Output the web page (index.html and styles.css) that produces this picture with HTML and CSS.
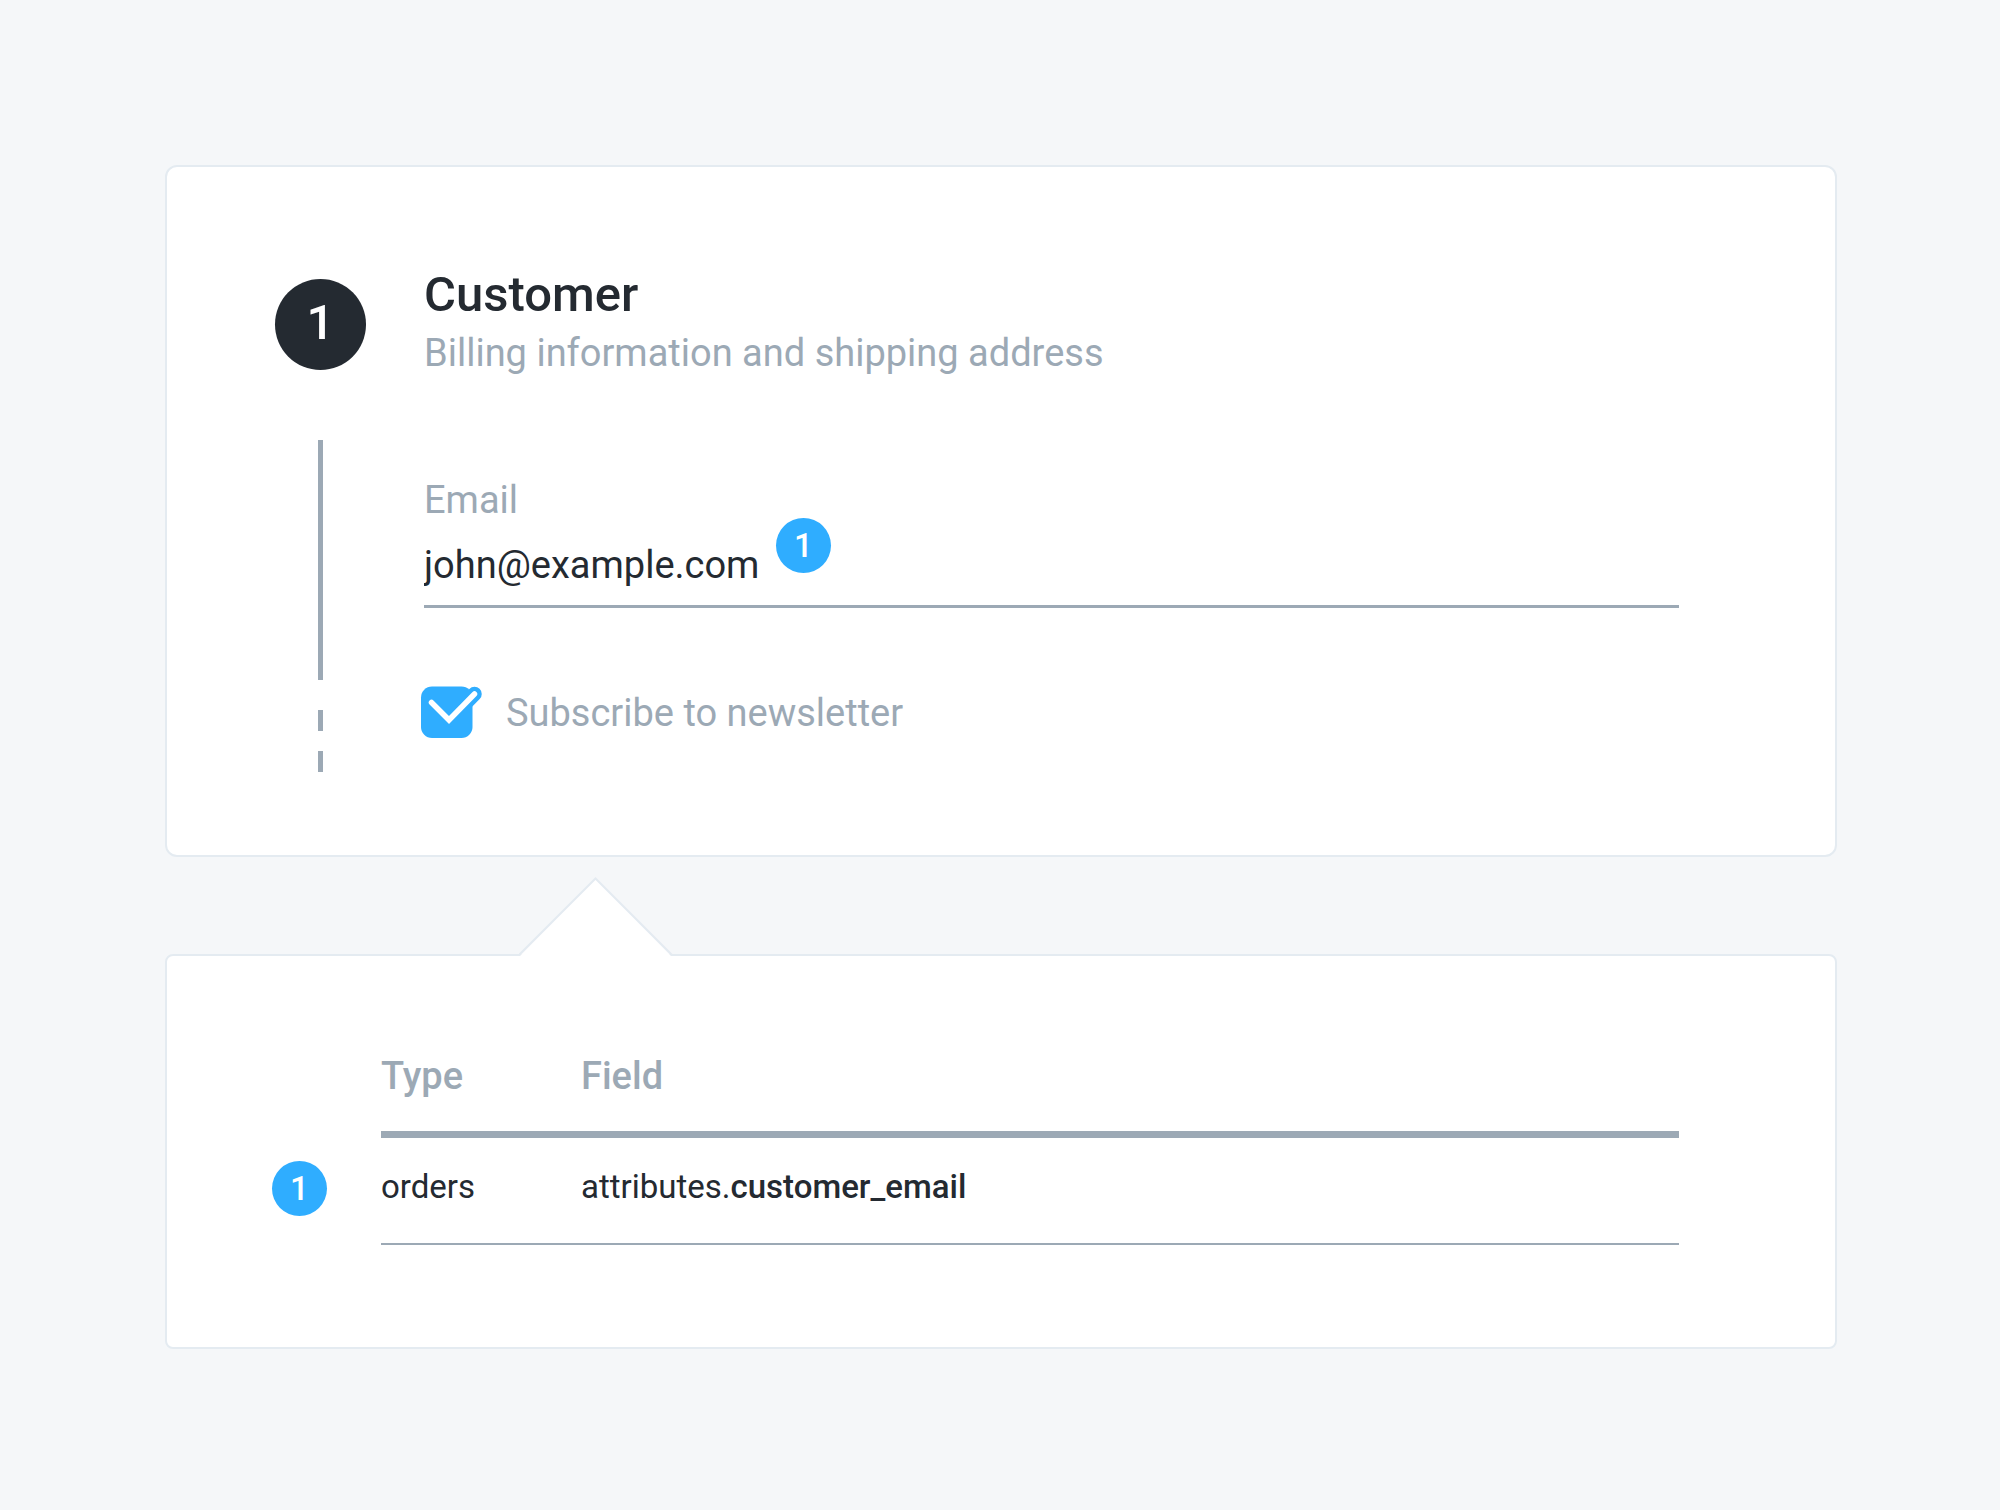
FILE: index.html
```html
<!DOCTYPE html>
<html lang="en">
<head>
  <meta charset="utf-8">
  <meta name="viewport" content="width=device-width, initial-scale=1">
  <title>Customer</title>
  <link rel="stylesheet" href="styles.css">
</head>
<body>
  <main class="page">
    <section class="card step">
      <span class="step-number">1</span>
      <header class="step-header">
        <h1 class="step-title">Customer</h1>
        <p class="step-subtitle">Billing information and shipping address</p>
      </header>
      <div class="rail">
        <span class="rail-line"></span>
        <span class="rail-dash"></span>
        <span class="rail-dash"></span>
      </div>
      <form class="step-form">
        <label class="field-label" for="email">Email</label>
        <div class="field">
          <input class="field-input" id="email" type="email" value="john@example.com">
          <span class="badge field-badge">1</span>
        </div>
        <label class="check" for="newsletter">
          <span class="check-box">
            <input class="check-input" id="newsletter" type="checkbox" checked>
            <svg class="check-icon" viewBox="0 1 58 52" fill="none" aria-hidden="true">
              <rect x="-3" y=".5" width="51.5" height="51.5" rx="11" fill="#2fadff"/>
              <g class="check-mark" stroke-linecap="round">
                <path d="M25 34 50.5 8" stroke="#2fadff" stroke-width="14.5"/>
                <path d="M7.500 16.500 25 34 50.5 8" stroke="#fff" stroke-width="5.5"/>
              </g>
            </svg>
          </span>
          <span>Subscribe to newsletter</span>
        </label>
      </form>
    </section>

    <section class="card mapping">
      <svg class="pointer" viewBox="0 0 154 80" fill="none" aria-hidden="true">
        <path d="M0 80 76.5 1.5 153 80Z" fill="#fff"/>
        <path d="M0 78 76.5 1.5 153 78" stroke="#e4ebf1" stroke-width="2"/>
      </svg>
      <table class="table">
        <thead>
          <tr>
            <td class="col-badge"></td>
            <th class="col-type" scope="col">Type</th>
            <th scope="col">Field</th>
          </tr>
        </thead>
        <tbody>
          <tr>
            <td class="col-badge"><span class="badge">1</span></td>
            <td>orders</td>
            <td>attributes.<b class="key">customer_email</b></td>
          </tr>
        </tbody>
      </table>
    </section>
  </main>
</body>
</html>
```

FILE: styles.css
```css
:root {
  --ink: #242a31;
  --muted: #9ca9b5;
  --blue: #2fadff;
  --edge: #e4ebf1;
}

* {
  box-sizing: border-box;
}

body {
  margin: 0;
  background: #f5f7f9;
  color: var(--ink);
  font-family: Roboto, "Liberation Sans", sans-serif;
  font-size: 38px;
  line-height: 58px;
}

.page {
  display: flex;
  flex-direction: column;
  gap: 97px;
  padding: 165px 163px 161px 165px;
}

.card {
  background: #fff;
  border: 2px solid var(--edge);
}

.step {
  display: grid;
  grid-template-columns: 91px 1fr;
  column-gap: 58px;
  row-gap: 58px;
  padding: 99px 156px 83px 108px;
  border-radius: 12px;
}

.step-number {
  align-self: center;
  height: 91px;
  border-radius: 50%;
  background: var(--ink);
  color: #fff;
  font-size: 49px;
  font-weight: 500;
  line-height: 88px;
  text-align: center;
}

.step-title {
  margin: 0;
  font-size: 49px;
  font-weight: 500;
}

.step-subtitle {
  margin: 0;
  color: var(--muted);
}

.rail {
  display: flex;
  flex-direction: column;
  align-items: center;
  gap: 20px;
}

.rail-line,
.rail-dash {
  width: 5px;
  height: 21px;
  background: var(--muted);
}

.rail-line {
  height: 240px;
  margin-bottom: 10px;
}

.step-form {
  display: flex;
  flex-direction: column;
  padding-top: 31px;
  color: var(--muted);
}

.field {
  position: relative;
  display: flex;
}

.field-input {
  width: 100%;
  height: 79px;
  padding: 0 0 4px;
  border: 0;
  border-bottom: 3px solid var(--muted);
  border-radius: 0;
  outline: 0;
  background: none;
  color: var(--ink);
  font: inherit;
}

.badge {
  display: block;
  width: 55px;
  height: 55px;
  border-radius: 50%;
  background: var(--blue);
  color: #fff;
  font-size: 33px;
  font-weight: 500;
  line-height: 56px;
  text-align: center;
}

.field-badge {
  position: absolute;
  top: -11px;
  left: 352px;
}

.check {
  display: flex;
  align-items: center;
  align-self: flex-start;
  gap: 24px;
  margin-top: 76px;
}

.check-box {
  position: relative;
  width: 58px;
  height: 52px;
}

.check-input {
  position: absolute;
  inset: 0;
  width: 100%;
  height: 100%;
  margin: 0;
  opacity: 0;
}

.check-icon {
  display: block;
  width: 58px;
  height: 52px;
  overflow: visible;
}

.check-mark {
  visibility: hidden;
}

.check-input:checked + .check-icon .check-mark {
  visibility: visible;
}

.mapping {
  position: relative;
  padding: 91px 156px 102px 105px;
  border-radius: 8px;
}

.pointer {
  position: absolute;
  top: -79px;
  left: 352px;
  width: 154px;
  height: 80px;
}

.table {
  width: 100%;
  border-collapse: separate;
  border-spacing: 0;
  table-layout: fixed;
  text-align: left;
}

.table th {
  padding: 0 0 26px;
  border-bottom: 7px solid var(--muted);
  color: var(--muted);
  font-weight: 500;
}

.table td {
  padding: 29px 0 0;
  border-bottom: 2px solid var(--muted);
  font-size: 33px;
  line-height: 40px;
  vertical-align: top;
}

.table .col-badge {
  width: 109px;
  padding: 23px 0 27px;
  border-bottom-color: transparent;
}

.col-type {
  width: 200px;
}

.key {
  font-weight: 500;
}
```
